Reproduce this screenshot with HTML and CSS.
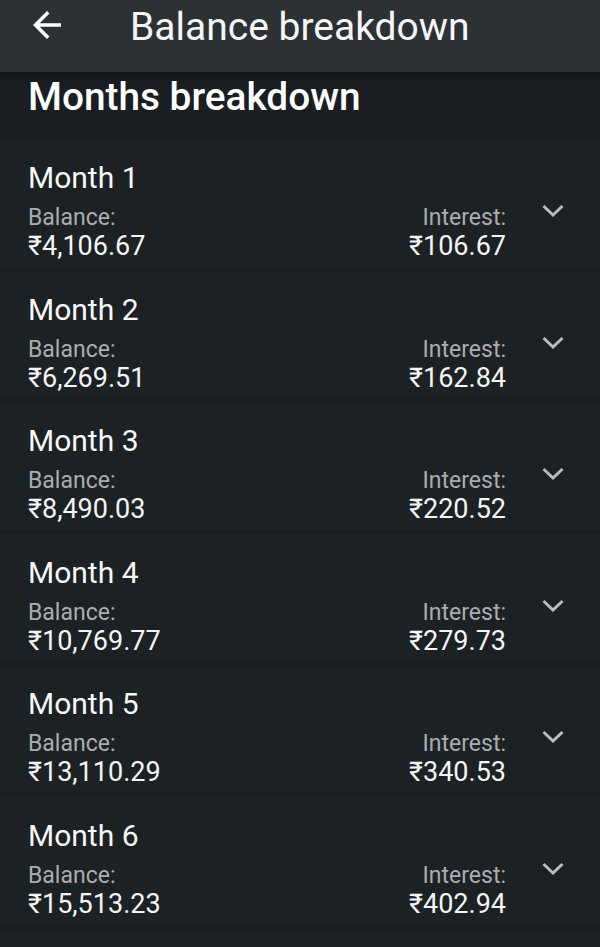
FILE: index.html
```html
<!DOCTYPE html>
<html>
<head>
<meta charset="utf-8">
<link rel="stylesheet" href="styles.css">
</head>
<body>
<header class="appbar">
  <svg class="back" viewBox="0 0 24 24" width="42" height="42"><path d="M20 11H7.83l5.59-5.59L12 4l-8 8 8 8 1.41-1.41L7.83 13H20v-2z" fill="#ffffff"/></svg>
  <h1 class="appbar-title">Balance breakdown</h1>
</header>
<main class="content">
  <h2 class="section-title">Months breakdown</h2>
  <div class="list">
    <div class="card">
      <div class="card-body">
        <div class="month">Month 1</div>
        <div class="cols">
          <div class="col"><div class="label">Balance:</div><div class="value">₹4,106.67</div></div>
          <div class="col right"><div class="label">Interest:</div><div class="value">₹106.67</div></div>
        </div>
      </div>
      <div class="chev"><svg viewBox="0 0 24 14" width="24" height="14"><polyline points="2.5,2 12,11 21.5,2" fill="none" stroke="#b9bdc0" stroke-width="3"/></svg></div>
    </div>
    <div class="card">
      <div class="card-body">
        <div class="month">Month 2</div>
        <div class="cols">
          <div class="col"><div class="label">Balance:</div><div class="value">₹6,269.51</div></div>
          <div class="col right"><div class="label">Interest:</div><div class="value">₹162.84</div></div>
        </div>
      </div>
      <div class="chev"><svg viewBox="0 0 24 14" width="24" height="14"><polyline points="2.5,2 12,11 21.5,2" fill="none" stroke="#b9bdc0" stroke-width="3"/></svg></div>
    </div>
    <div class="card">
      <div class="card-body">
        <div class="month">Month 3</div>
        <div class="cols">
          <div class="col"><div class="label">Balance:</div><div class="value">₹8,490.03</div></div>
          <div class="col right"><div class="label">Interest:</div><div class="value">₹220.52</div></div>
        </div>
      </div>
      <div class="chev"><svg viewBox="0 0 24 14" width="24" height="14"><polyline points="2.5,2 12,11 21.5,2" fill="none" stroke="#b9bdc0" stroke-width="3"/></svg></div>
    </div>
    <div class="card">
      <div class="card-body">
        <div class="month">Month 4</div>
        <div class="cols">
          <div class="col"><div class="label">Balance:</div><div class="value">₹10,769.77</div></div>
          <div class="col right"><div class="label">Interest:</div><div class="value">₹279.73</div></div>
        </div>
      </div>
      <div class="chev"><svg viewBox="0 0 24 14" width="24" height="14"><polyline points="2.5,2 12,11 21.5,2" fill="none" stroke="#b9bdc0" stroke-width="3"/></svg></div>
    </div>
    <div class="card">
      <div class="card-body">
        <div class="month">Month 5</div>
        <div class="cols">
          <div class="col"><div class="label">Balance:</div><div class="value">₹13,110.29</div></div>
          <div class="col right"><div class="label">Interest:</div><div class="value">₹340.53</div></div>
        </div>
      </div>
      <div class="chev"><svg viewBox="0 0 24 14" width="24" height="14"><polyline points="2.5,2 12,11 21.5,2" fill="none" stroke="#b9bdc0" stroke-width="3"/></svg></div>
    </div>
    <div class="card">
      <div class="card-body">
        <div class="month">Month 6</div>
        <div class="cols">
          <div class="col"><div class="label">Balance:</div><div class="value">₹15,513.23</div></div>
          <div class="col right"><div class="label">Interest:</div><div class="value">₹402.94</div></div>
        </div>
      </div>
      <div class="chev"><svg viewBox="0 0 24 14" width="24" height="14"><polyline points="2.5,2 12,11 21.5,2" fill="none" stroke="#b9bdc0" stroke-width="3"/></svg></div>
    </div>
    <div class="card tail"></div>
  </div>
</main>
</body>
</html>
```
FILE: styles.css
```css
html, body {
  margin: 0;
  padding: 0;
  background: #1a1d22;
  font-family: Roboto, "Noto Sans", "DejaVu Sans", sans-serif;
  color: #f4f4f4;
  height: 947px;
  overflow: hidden;
}
.appbar {
  height: 72px;
  background: #2c3234;
  display: flex;
  align-items: flex-start;
  box-sizing: border-box;
  padding-left: 26px;
}
.back {
  display: block;
  margin-top: 4px;
}
.appbar-title {
  margin: 4px 0 0 62px;
  font-size: 39px;
  font-weight: 400;
  color: #f6f6f6;
  line-height: 46px;
}
.content {
  display: block;
}
.section-title {
  margin: 0;
  padding: 3px 0 0 28px;
  box-sizing: border-box;
  font-size: 38.8px;
  font-weight: 500;
  line-height: 44px;
  height: 68px;
  color: #ffffff;
  background: linear-gradient(#12161a 0px, #181b20 8px, #1a1d22 14px, #1a1d22 100%);
}
.list {
  display: flex;
  flex-direction: column;
  gap: 6px;
}
.card {
  display: flex;
  background: #1c2124;
  height: 125.6px;
  box-sizing: border-box;
  padding: 21px 0 6px 28px;
}
.card.tail {
  height: 20px;
}
.card-body {
  flex: 1;
  display: flex;
  flex-direction: column;
}
.month {
  font-size: 30px;
  line-height: 34px;
  color: #f7f7f7;
}
.cols {
  display: flex;
  justify-content: space-between;
  margin-top: 10px;
}
.col.right {
  text-align: right;
}
.label {
  font-size: 23px;
  line-height: 26px;
  color: #a9adb0;
}
.value {
  font-size: 27px;
  line-height: 30px;
  color: #f4f4f4;
}
.chev {
  width: 94px;
  display: flex;
  justify-content: center;
  padding-top: 43px;
  box-sizing: border-box;
}
.chev svg {
  display: block;
}
```
